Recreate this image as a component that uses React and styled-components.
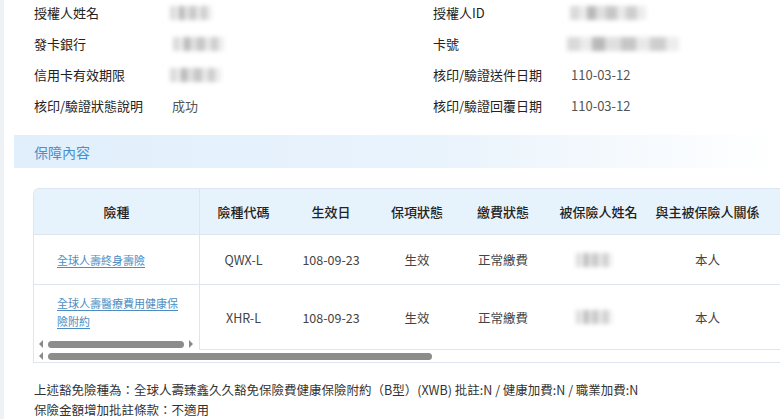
import React from "react";
import styled, { createGlobalStyle } from "styled-components";

const GlobalStyle = createGlobalStyle`
  html, body {
    margin: 0;
    padding: 0;
    background: #fff;
    overflow: hidden;
  }
  body {
    font-family: "Noto Sans CJK TC", "Noto Sans", sans-serif;
    color: #333;
  }
`;

const Page = styled.div`
  width: 780px;
  height: 419px;
  border-left: 4px solid #eef2f5;
  box-sizing: border-box;
  overflow: hidden;
`;

const InfoGrid = styled.div`
  display: grid;
  grid-template-columns: 138px 261px 138px 1fr;
  grid-auto-rows: 31px;
  padding-left: 30px;
  margin-top: -3px;
  font-size: 13px;
  align-items: center;
`;

const Label = styled.div`
  color: #222;
`;

const Value = styled.div`
  color: #555;
  display: flex;
  align-items: center;
`;

const Blur = styled.span`
  display: inline-block;
  width: ${({ $w }) => $w}px;
  height: 14px;
  margin-left: ${({ $x }) => $x || 0}px;
  background:
    linear-gradient(90deg,
      #d4d4d4 0 12%, #e8e8e8 12% 22%, #adadad 22% 34%, #dadada 34% 48%,
      #bdbdbd 48% 62%, #e5e5e5 62% 74%, #c6c6c6 74% 88%, #eaeaea 88% 100%);
  filter: blur(2px);
  opacity: 0.85;
`;

const SectionBar = styled.div`
  margin: 14px 0 0 10px;
  height: 33px;
  display: flex;
  align-items: center;
  padding-left: 20px;
  background: linear-gradient(90deg, #e1effc 0%, #e9f3fc 55%, #ffffff 100%);
  color: #4a8fcc;
  font-size: 14px;
`;

const Card = styled.div`
  margin: 20px 0 0 29px;
  width: 820px;
  border: 1px solid #dde6ee;
  border-right: none;
  border-radius: 6px 0 0 0;
  overflow: hidden;
`;

const Body = styled.div`
  display: flex;
`;

const Frozen = styled.div`
  width: 165px;
  flex-shrink: 0;
  border-right: 1px solid #dde6ee;
  display: flex;
  flex-direction: column;
`;

const Scroller = styled.div`
  flex: 1;
  display: flex;
  flex-direction: column;
`;

const Row = styled.div`
  height: ${({ $h }) => $h}px;
  display: ${({ $grid }) => ($grid ? "grid" : "flex")};
  grid-template-columns: 87px 88px 84px 88px 103px 115px 1fr;
  align-items: center;
  background: ${({ $head }) => ($head ? "#e6f2fc" : "#fff")};
  border-bottom: ${({ $last }) => ($last ? "none" : "1px solid #dde6ee")};
  box-sizing: border-box;
  font-size: 12.5px;
`;

const HeadCell = styled.div`
  text-align: center;
  color: #222;
  font-weight: 500;
  font-size: 13px;
  flex: ${({ $fill }) => ($fill ? 1 : "none")};
`;

const Cell = styled.div`
  text-align: center;
  color: #444;
  display: flex;
  justify-content: center;
`;

const LinkCell = styled.a`
  display: block;
  padding: 0 16px 0 23px;
  color: #4b8cc2;
  font-size: 11px;
  line-height: 18px;
  text-decoration: underline;
  text-underline-offset: 2px;
`;

const Spacer = styled.div`
  flex: 1;
`;

const ScrollTrack = styled.div`
  height: ${({ $h }) => $h}px;
  display: flex;
  align-items: center;
  gap: 3px;
  padding-left: 3px;
  box-sizing: border-box;
`;

const Arrow = styled.span`
  width: 0;
  height: 0;
  border-top: 4px solid transparent;
  border-bottom: 4px solid transparent;
  ${({ $dir }) =>
    $dir === "left"
      ? "border-right: 4px solid #8a8a8a;"
      : "border-left: 4px solid #8a8a8a;"}
  margin: 0 2px;
`;

const Thumb = styled.span`
  width: ${({ $w }) => $w}px;
  height: 7px;
  border-radius: 4px;
  background: #8c8c8c;
`;

const Notes = styled.div`
  margin: 17px 0 0 30px;
  font-size: 12.5px;
  line-height: 20px;
  color: #333;
`;

const info = [
  ["授權人姓名", <Blur $w={42} $x={-2} />, "授權人ID", <Blur $w={76} $x={-1} />],
  ["發卡銀行", <Blur $w={51} $x={1} />, "卡號", <Blur $w={112} $x={-4} />],
  ["信用卡有效期限", <Blur $w={51} $x={-2} />, "核印/驗證送件日期", "110-03-12"],
  ["核印/驗證狀態說明", "成功", "核印/驗證回覆日期", "110-03-12"],
];

const heads = ["險種代碼", "生效日", "保項狀態", "繳費狀態", "被保險人姓名", "與主被保險人關係"];

const rows = [
  { name: "全球人壽終身壽險", code: "QWX-L", h: 50 },
  { name: "全球人壽醫療費用健康保險附約", code: "XHR-L", h: 65 },
];

const App = () => {
  return (
    <Page>
      <GlobalStyle />
      <InfoGrid>
        {info.map((r, i) => (
          <React.Fragment key={i}>
            <Label>{r[0]}</Label>
            <Value>{r[1]}</Value>
            <Label>{r[2]}</Label>
            <Value>{r[3]}</Value>
          </React.Fragment>
        ))}
      </InfoGrid>

      <SectionBar>保障內容</SectionBar>

      <Card>
        <Body>
          <Frozen>
            <Row $h={46} $head>
              <HeadCell $fill>險種</HeadCell>
            </Row>
            <Row $h={50}>
              <LinkCell>{rows[0].name}</LinkCell>
            </Row>
            <Row $h={53} $last>
              <LinkCell>{rows[1].name}</LinkCell>
            </Row>
            <ScrollTrack $h={12}>
              <Arrow $dir="left" />
              <Thumb $w={136} />
              <Arrow $dir="right" />
            </ScrollTrack>
          </Frozen>
          <Scroller>
            <Row $h={46} $head $grid>
              {heads.map((h) => (
                <HeadCell key={h}>{h}</HeadCell>
              ))}
            </Row>
            {rows.map((r) => (
              <Row key={r.code} $h={r.h} $grid>
                <Cell>{r.code}</Cell>
                <Cell>108-09-23</Cell>
                <Cell>生效</Cell>
                <Cell>正常繳費</Cell>
                <Cell>
                  <Blur $w={36} $x={-10} />
                </Cell>
                <Cell>本人</Cell>
              </Row>
            ))}
            <Spacer />
          </Scroller>
        </Body>
        <ScrollTrack $h={12}>
          <Arrow $dir="left" />
          <Thumb $w={384} />
        </ScrollTrack>
      </Card>

      <Notes>
        <div>上述豁免險種為：全球人壽臻鑫久久豁免保險費健康保險附約（B型）(XWB) 批註:N / 健康加費:N / 職業加費:N</div>
        <div>保險金額增加批註條款：不適用</div>
      </Notes>
    </Page>
  );
};

export default App;
